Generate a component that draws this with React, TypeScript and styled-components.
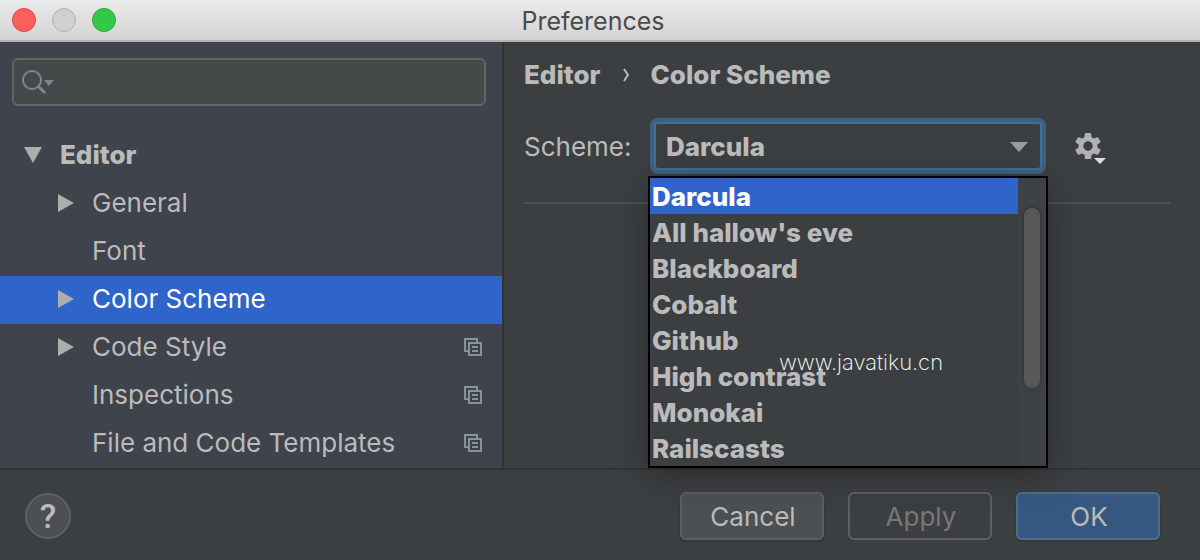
import React, { useState } from 'react';
import styled, { createGlobalStyle, css } from 'styled-components';

const sans = "Inter, Roboto, 'Liberation Sans', sans-serif";

const bold = css`
  font-weight: 800;
`;

const GlobalStyle = createGlobalStyle`
  *, *::before, *::after { box-sizing: border-box; }
  body {
    margin: 0;
    background: #3c3f41;
    color: #bbbbbb;
    font-family: ${sans};
    font-size: 26px;
    line-height: 32px;
  }
  button, input, select { font: inherit; color: inherit; }
`;

const Window = styled.div`
  display: flex;
  flex-direction: column;
  min-height: 100vh;
`;

const TitleBar = styled.header`
  display: grid;
  grid-template-columns: 1fr auto 1fr;
  align-items: center;
  height: 42px;
  padding: 0 26px 0 12px;
  background: linear-gradient(#ebebeb, #d3d3d3);
  border-bottom: 2px solid #b4b4b4;
`;

const WindowControls = styled.div`
  display: flex;
  gap: 16px;
`;

const WindowControl = styled.button<{ $fill: string; $edge: string }>`
  width: 24px;
  height: 24px;
  padding: 0;
  border: 1px solid ${(p) => p.$edge};
  border-radius: 50%;
  background: ${(p) => p.$fill};
`;

const Title = styled.h1`
  margin: 0;
  padding-top: 2px;
  color: #4a4a4a;
  font-size: 25px;
  font-weight: 400;
`;

const Body = styled.div`
  display: flex;
  flex: 1;
`;

const Sidebar = styled.aside`
  flex: 0 0 42%;
  padding-top: 16px;
  background: #3f434c;
  border-right: 2px solid #323232;
`;

const SearchField = styled.label`
  display: flex;
  align-items: center;
  height: 48px;
  margin: 0 16px 26px 12px;
  padding: 0 8px;
  border: 2px solid #646464;
  border-radius: 6px;
  background: #45494a;
`;

const SearchInput = styled.input`
  flex: 1;
  min-width: 0;
  border: 0;
  outline: 0;
  background: transparent;
`;

const Tree = styled.ul`
  margin: 0;
  padding: 0;
  list-style: none;
`;

const TreeRow = styled.button<{ $depth: number; $selected: boolean }>`
  display: flex;
  align-items: center;
  width: 100%;
  height: 48px;
  padding: 0 20px 2px ${(p) => 24 + p.$depth * 32}px;
  border: 0;
  background: ${(p) => (p.$selected ? '#2f65ca' : 'transparent')};
  color: ${(p) => (p.$selected ? '#ffffff' : '#bbbbbb')};
  text-align: left;
  ${(p) => p.$depth === 0 && bold}
`;

const Twisty = styled.span`
  display: flex;
  flex: 0 0 36px;
`;

const TreeLabel = styled.span`
  flex: 1;
  white-space: nowrap;
`;

const Content = styled.main`
  flex: 1;
  min-width: 0;
  padding: 18px 30px 0 20px;
`;

const Breadcrumb = styled.nav`
  display: flex;
  align-items: center;
  gap: 22px;
  height: 30px;
  ${bold}
`;

const SchemeRow = styled.div`
  display: flex;
  align-items: center;
  height: 114px;
  border-bottom: 2px solid #515151;
`;

const SchemeLabel = styled.label`
  flex: 0 0 130px;
  padding-top: 2px;
`;

const ComboBox = styled.div`
  position: relative;
  display: flex;
  flex: 0 1 388px;
`;

const ComboSelect = styled.select`
  appearance: none;
  width: 100%;
  height: 48px;
  padding: 2px 40px 0 10px;
  border: 2px solid #466d94;
  border-radius: 4px;
  outline: 0;
  box-shadow: 0 0 0 4px #3d6185;
  background: #3c3f41;
  && {
    ${bold}
  }
`;

const ComboArrow = styled.svg`
  position: absolute;
  top: 20px;
  right: 14px;
  pointer-events: none;
`;

const Popup = styled.div`
  position: absolute;
  z-index: 1;
  top: 54px;
  left: -6px;
  right: -6px;
  display: flex;
  border: 2px solid #000000;
  background: #3c3f41;
  box-shadow: 0 8px 32px rgba(0, 0, 0, 0.3);
`;

const SchemeList = styled.ul`
  flex: 1;
  margin: 0;
  padding: 0;
  list-style: none;
`;

const SchemeOption = styled.button<{ $selected: boolean }>`
  display: block;
  width: 100%;
  height: 36px;
  padding: 2px 2px 0;
  border: 0;
  background: ${(p) => (p.$selected ? '#2f65ca' : 'transparent')};
  color: ${(p) => (p.$selected ? '#ffffff' : '#bbbbbb')};
  text-align: left;
  ${bold}
`;

const ScrollTrack = styled.div`
  flex: 0 0 28px;
  padding: 28px 4px 0 4px;
  background: #3f4244;
`;

const ScrollThumb = styled.div`
  width: 20px;
  height: 184px;
  border: 2px solid #393a3b;
  border-radius: 10px;
  background: #585859;
`;

const Watermark = styled.span`
  position: absolute;
  top: 168px;
  left: 129px;
  color: #ffffff;
  font-size: 22px;
  font-weight: 200;
  pointer-events: none;
`;

const GearButton = styled.button`
  display: flex;
  margin-left: 32px;
  padding: 4px 0 0;
  border: 0;
  background: transparent;
`;

const Footer = styled.footer`
  display: flex;
  align-items: center;
  gap: 24px;
  padding: 22px 40px 20px 25px;
  border-top: 2px solid #323232;
`;

const HelpButton = styled.button`
  width: 46px;
  height: 46px;
  margin-right: auto;
  padding: 0;
  border: 2px solid #5e6060;
  border-radius: 50%;
  background: #4c5052;
  font-family: Roboto, sans-serif;
  font-size: 34px;
  font-weight: 500;
`;

const DialogButton = styled.button<{ $kind: 'plain' | 'primary' }>`
  width: 144px;
  height: 48px;
  padding: 2px 0 0 2px;
  border: 2px solid ${(p) => (p.$kind === 'primary' ? '#4c708c' : '#5e6060')};
  border-radius: 6px;
  background: ${(p) => (p.$kind === 'primary' ? '#365880' : '#4c5052')};
  box-shadow: 0 2px 0 1px rgba(0, 0, 0, 0.08);
  &:disabled {
    background: transparent;
    box-shadow: none;
    color: #777777;
  }
`;

const Expanded = () => (
  <svg width="18" height="16" viewBox="0 0 18 16" aria-hidden="true">
    <path d="M0 0h18L9 16z" fill="#adadad" />
  </svg>
);

const Collapsed = () => (
  <svg width="20" height="18" viewBox="0 0 20 18" aria-hidden="true">
    <path d="M2 0v18l16-9z" fill="#adadad" />
  </svg>
);

const SearchIcon = () => (
  <svg width="34" height="26" viewBox="0 0 34 26" aria-hidden="true">
    <circle cx="10" cy="11" r="9" fill="none" stroke="#7c878f" strokeWidth="2" />
    <path d="M16 17l7 7" stroke="#7c878f" strokeWidth="3" />
    <path d="M22 11h10l-5 6z" fill="#7c878f" />
  </svg>
);

const ProjectIcon = () => (
  <svg width="18" height="18" viewBox="0 0 18 18" fill="none" stroke="#87939a" strokeWidth="2" aria-hidden="true">
    <path d="M5 13H1V1h12v4" />
    <path d="M5 5h12v12H5zM8 9h6M8 13h6" />
  </svg>
);

const GearIcon = () => (
  <svg width="32" height="32" viewBox="0 0 32 32" aria-hidden="true">
    <g fill="#afb1b3">
      <circle cx="14" cy="14" r="7" fill="none" stroke="#afb1b3" strokeWidth="5" />
      {[0, 60, 120, 180, 240, 300].map((angle) => (
        <path key={angle} d="M11 1h6l.8 6h-7.600z" transform={`rotate(${angle} 14 14)`} />
      ))}
      <circle cx="14" cy="14" r="4.500" fill="#3c3f41" />
    </g>
    <path d="M20 26h12l-6 6z" fill="#dddddd" />
  </svg>
);

type Item = { label: string; depth: number; open?: boolean; project?: boolean };

const items: Item[] = [
  { label: 'Editor', depth: 0, open: true },
  { label: 'General', depth: 1, open: false },
  { label: 'Font', depth: 1 },
  { label: 'Color Scheme', depth: 1, open: false },
  { label: 'Code Style', depth: 1, open: false, project: true },
  { label: 'Inspections', depth: 1, project: true },
  { label: 'File and Code Templates', depth: 1, project: true },
];

const schemes = [
  'Darcula',
  "All hallow's eve",
  'Blackboard',
  'Cobalt',
  'Github',
  'High contrast',
  'Monokai',
  'Railscasts',
];

export default function App() {
  const [page, setPage] = useState('Color Scheme');
  const [scheme, setScheme] = useState('Darcula');

  return (
    <Window>
      <GlobalStyle />
      <TitleBar>
        <WindowControls>
          <WindowControl $fill="#fc605c" $edge="#dd4644" aria-label="Close" />
          <WindowControl $fill="#d0d0d0" $edge="#b0b0b0" aria-label="Minimize" />
          <WindowControl $fill="#34c84a" $edge="#25a934" aria-label="Zoom" />
        </WindowControls>
        <Title>Preferences</Title>
      </TitleBar>
      <Body>
        <Sidebar>
          <SearchField>
            <SearchIcon />
            <SearchInput type="text" aria-label="Search settings" />
          </SearchField>
          <Tree>
            {items.map((item) => (
              <li key={item.label}>
                <TreeRow
                  $depth={item.depth}
                  $selected={item.label === page}
                  onClick={() => setPage(item.label)}
                >
                  <Twisty>
                    {item.open === true && <Expanded />}
                    {item.open === false && <Collapsed />}
                  </Twisty>
                  <TreeLabel>{item.label}</TreeLabel>
                  {item.project && <ProjectIcon />}
                </TreeRow>
              </li>
            ))}
          </Tree>
        </Sidebar>
        <Content>
          <Breadcrumb aria-label="Breadcrumb">
            <span>Editor</span>
            <svg width="6" height="14" viewBox="0 0 6 14" aria-hidden="true">
              <path d="M1 1l4 6-4 6" fill="none" stroke="#bbbbbb" strokeWidth="2" />
            </svg>
            <span>Color Scheme</span>
          </Breadcrumb>
          <SchemeRow>
            <SchemeLabel htmlFor="scheme">Scheme:</SchemeLabel>
            <ComboBox>
              <ComboSelect id="scheme" value={scheme} onChange={(e) => setScheme(e.target.value)}>
                {schemes.map((name) => (
                  <option key={name}>{name}</option>
                ))}
              </ComboSelect>
              <ComboArrow width="18" height="10" viewBox="0 0 18 10" aria-hidden="true">
                <path d="M0 0h18l-9 10z" fill="#9a9da0" />
              </ComboArrow>
              <Popup>
                <SchemeList>
                  {schemes.map((name) => (
                    <li key={name}>
                      <SchemeOption $selected={name === scheme} onClick={() => setScheme(name)}>
                        {name}
                      </SchemeOption>
                    </li>
                  ))}
                </SchemeList>
                <ScrollTrack>
                  <ScrollThumb />
                </ScrollTrack>
                <Watermark>www.javatiku.cn</Watermark>
              </Popup>
            </ComboBox>
            <GearButton aria-label="Scheme actions">
              <GearIcon />
            </GearButton>
          </SchemeRow>
        </Content>
      </Body>
      <Footer>
        <HelpButton aria-label="Help">?</HelpButton>
        <DialogButton $kind="plain">Cancel</DialogButton>
        <DialogButton $kind="plain" disabled>
          Apply
        </DialogButton>
        <DialogButton $kind="primary">OK</DialogButton>
      </Footer>
    </Window>
  );
}
